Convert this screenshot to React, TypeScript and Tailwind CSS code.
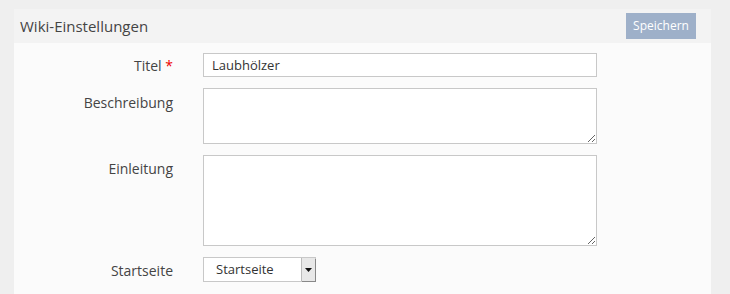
import React from 'react';

const labelCls = 'w-[173px] shrink-0 -ml-[14px] text-right text-[14px] leading-5 text-[#444] pt-[4px]';

export default function App() {
  return (
    <div className="h-[294px] w-[730px] overflow-hidden bg-[#efefef] pl-[14px] pt-[9px] font-['Open_Sans',sans-serif]">
      <div className="w-[697px] h-full flex flex-col">
        {/* Header */}
        <div className="h-[34px] bg-[#f3f3f3] flex items-center justify-between pl-[6px] pr-[15px]">
          <h1 className="text-[15px] text-[#444] font-normal">Wiki-Einstellungen</h1>
          <button className="h-[26px] w-[70px] bg-[#9eb0c9] text-white text-[12px]">Speichern</button>
        </div>

        {/* Body */}
        <div className="flex-1 bg-[#fbfbfb] pt-[9px] flex flex-col gap-[11px]">
          <div className="flex">
            <label className={labelCls}>
              Titel <span className="text-[#e00]">*</span>
            </label>
            <div className="pl-[30px]">
              <input
                defaultValue="Laubhölzer"
                className="h-[24px] w-[394px] border border-[#c8c8c8] bg-white px-[8px] text-[13px] text-[#333] outline-none"
              />
            </div>
          </div>

          <div className="flex">
            <label className={labelCls + ' pt-[5px]'}>Beschreibung</label>
            <div className="pl-[30px]">
              <textarea className="block h-[56px] w-[394px] border border-[#c8c8c8] bg-white outline-none" />
            </div>
          </div>

          <div className="flex">
            <label className={labelCls}>Einleitung</label>
            <div className="pl-[30px]">
              <textarea className="block h-[91px] w-[394px] border border-[#c8c8c8] bg-white outline-none" />
            </div>
          </div>

          <div className="flex">
            <label className={labelCls}>Startseite</label>
            <div className="pl-[30px]">
              <div className="h-[25px] w-[113px] border border-[#c8c8c8] bg-white flex items-stretch">
                <span className="flex-1 pl-[12px] text-[13px] leading-[23px] text-[#333]">Startseite</span>
                <span className="w-[14px] bg-[#e8e8e8] border-l border-[#bbb] shadow-[1px_1px_0_#888] flex items-center justify-center">
                  <svg width="7" height="4" viewBox="0 0 7 4"><path d="M0 0h7L3.5 4z" fill="#111" /></svg>
                </span>
              </div>
            </div>
          </div>
        </div>
      </div>
    </div>
  );
}
